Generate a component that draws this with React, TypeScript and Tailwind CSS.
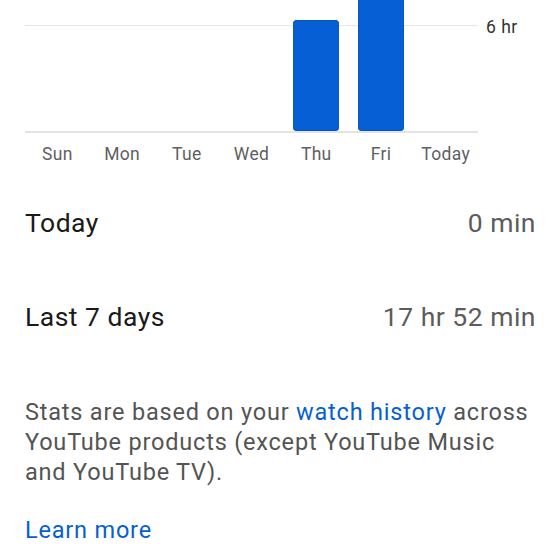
const DAYS = [
  { label: "Sun", minutes: 0 },
  { label: "Mon", minutes: 0 },
  { label: "Tue", minutes: 0 },
  { label: "Wed", minutes: 0 },
  { label: "Thu", minutes: 377 },
  { label: "Fri", minutes: 695 },
  { label: "Today", minutes: 0 },
];

// 6 hr gridline sits 106px above the baseline
const PX_PER_MIN = 106 / 360;

export default function App() {
  return (
    <div
      className="w-[560px] h-[560px] overflow-hidden bg-white"
      style={{ fontFamily: "Roboto, 'Noto Sans', Arial, sans-serif" }}
    >
      {/* Chart */}
      <div className="flex pl-[25px]">
        <div className="w-[453px]">
          <div className="relative h-[131px] overflow-hidden">
            <div className="absolute left-0 right-0 bottom-[105px] h-px bg-[#e6e6e6]" />
            <div className="relative flex h-full">
              {DAYS.map((d) => (
                <div key={d.label} className="flex-1 flex justify-center items-end h-full">
                  {d.minutes > 0 && (
                    <div
                      className="w-[46px] shrink-0 rounded-[3px] bg-[#065fd4] border border-[#0a55c0]"
                      style={{ height: `${Math.round(d.minutes * PX_PER_MIN)}px` }}
                    />
                  )}
                </div>
              ))}
            </div>
          </div>
          <div className="h-[2px] bg-[#e3e3e3]" />
          <div className="flex mt-[11px]">
            {DAYS.map((d) => (
              <div
                key={d.label}
                className="flex-1 text-center text-[17.5px] leading-[20px] tracking-[0.3px] text-[#5f5f5f]"
              >
                {d.label}
              </div>
            ))}
          </div>
        </div>
        <div className="pl-[8px] pt-[17px] text-[17.5px] leading-[20px] tracking-[0.5px] text-[#333333]">
          6 hr
        </div>
      </div>

      {/* Totals */}
      <div className="pl-[25px] pr-[24px]">
        <div className="flex justify-between mt-[43px] text-[26.5px] leading-[32px] tracking-[0.5px]">
          <span className="text-[#1a1a1a]">Today</span>
          <span className="text-[#5c5c5c]">0 min</span>
        </div>
        <div className="flex justify-between mt-[62px] text-[26.5px] leading-[32px] tracking-[0.5px]">
          <span className="text-[#1a1a1a]">Last 7 days</span>
          <span className="text-[#5c5c5c]">17 hr 52 min</span>
        </div>
      </div>

      <div className="pl-[25px] pr-[18px]">
        <p className="mt-[64px] text-[23.5px] leading-[30px] tracking-[0.8px] text-[#545454]">
          Stats are based on your <span className="text-[#065fd4]">watch history</span> across
          YouTube products (except YouTube Music and YouTube TV).
        </p>
        <div className="mt-[28px] text-[23.5px] leading-[30px] tracking-[0.8px] text-[#065fd4]">
          Learn more
        </div>
      </div>
    </div>
  );
}
